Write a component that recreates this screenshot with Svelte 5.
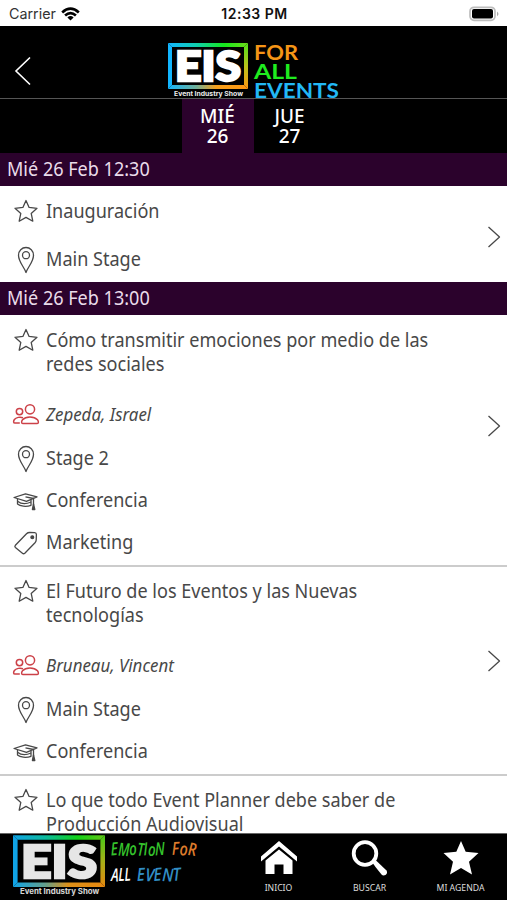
<script>
  const days = [
    { name: 'MIÉ', number: 26, active: true },
    { name: 'JUE', number: 27, active: false },
  ];

  const blocks = [
    {
      time: 'Mié 26 Feb 12:30',
      sessions: [
        { title: ['Inauguración'], rows: [{ icon: 'pin', text: 'Main Stage' }] },
      ],
    },
    {
      time: 'Mié 26 Feb 13:00',
      sessions: [
        {
          title: ['Cómo transmitir emociones por medio de las', 'redes sociales'],
          rows: [
            { icon: 'people', text: 'Zepeda, Israel' },
            { icon: 'pin', text: 'Stage 2' },
            { icon: 'cap', text: 'Conferencia' },
            { icon: 'tag', text: 'Marketing' },
          ],
        },
        {
          title: ['El Futuro de los Eventos y las Nuevas', 'tecnologías'],
          rows: [
            { icon: 'people', text: 'Bruneau, Vincent' },
            { icon: 'pin', text: 'Main Stage' },
            { icon: 'cap', text: 'Conferencia' },
          ],
        },
        {
          title: ['Lo que todo Event Planner debe saber de', 'Producción Audiovisual'],
          rows: [],
        },
      ],
    },
  ];
</script>

{#snippet eis(id)}
  <defs>
    <linearGradient id="{id}-top" x1="0" x2="1" y1="0" y2="0">
      <stop offset="0" stop-color="#12b5ff" />
      <stop offset="0.35" stop-color="#0fcfb0" />
      <stop offset="0.7" stop-color="#14e81c" />
      <stop offset="1" stop-color="#6fdc18" />
    </linearGradient>
    <linearGradient id="{id}-bottom" x1="0" x2="1" y1="0" y2="0">
      <stop offset="0" stop-color="#12b5ff" />
      <stop offset="0.35" stop-color="#6fb09a" />
      <stop offset="0.6" stop-color="#f5a01c" />
      <stop offset="1" stop-color="#ff9712" />
    </linearGradient>
    <linearGradient id="{id}-right" x1="0" x2="0" y1="0" y2="1">
      <stop offset="0" stop-color="#4fe01a" />
      <stop offset="0.5" stop-color="#b8c41a" />
      <stop offset="1" stop-color="#ff9712" />
    </linearGradient>
  </defs>
  <path fill="#12b5ff" d="M0 1L4 5V43L0 47Z" />
  <path fill="url(#{id}-top)" d="M0 1H80L76 5H4Z" />
  <path fill="url(#{id}-right)" d="M80 1V47L76 43V5Z" />
  <path fill="url(#{id}-bottom)" d="M0 47L4 43H76L80 47Z" />
  <text class="eis" x="7" y="38.800" textLength="66" lengthAdjust="spacingAndGlyphs">EIS</text>
  <text class="eis-sub" x="6" y="53.500" textLength="69" lengthAdjust="spacingAndGlyphs">Event Industry Show</text>
{/snippet}

<div class="screen">
  <div class="phone-bar">
    <div class="carrier">
      <span>Carrier</span>
      <svg width="19" height="14" viewBox="0 0 19 14">
        <g fill="none" stroke="#000" stroke-width="2.7">
          <path d="M1.200 5.400Q9.500-2 17.800 5.400" />
          <path d="M4.100 8.500Q9.500 3.700 14.900 8.500" />
        </g>
        <path d="M6.400 10.400Q9.500 7.800 12.600 10.400L9.500 13.500Z" />
      </svg>
    </div>
    <div class="clock">12:33 PM</div>
    <div class="battery">
      <svg width="32" height="16" viewBox="0 0 32 16">
        <rect x="2" y="1.300" width="25" height="13" rx="4" fill="#fff" stroke="#bdbdbd" stroke-width="1.700" />
        <rect x="4" y="3" width="21" height="9.600" rx="2" />
        <path d="M29 5.400Q32 7.800 29 10.200Z" fill="#aaa" />
      </svg>
    </div>
  </div>

  <header class="header">
    <svg class="back" width="18" height="30" viewBox="0 0 18 30">
      <path d="M16 1.500L2 15L16 28.500" fill="none" stroke="#fff" stroke-width="1.600" />
    </svg>
    <svg class="logo" width="172" height="56" viewBox="0 0 172 56">
      {@render eis('head')}
      <g class="slogan">
        <text x="86" y="18" fill="#f59516" textLength="44" lengthAdjust="spacingAndGlyphs">FOR</text>
        <text x="86" y="37" fill="#1fec1f" textLength="43" lengthAdjust="spacingAndGlyphs">ALL</text>
        <text x="86" y="55.500" fill="#22b8f5" textLength="85" lengthAdjust="spacingAndGlyphs">EVENTS</text>
      </g>
    </svg>
  </header>

  <nav class="days">
    {#each days as day}
      <div class="day" class:active={day.active}>
        <span>{day.name}</span>
        <span>{day.number}</span>
      </div>
    {/each}
  </nav>

  <main class="agenda">
    {#each blocks as block}
      <h2 class="time"><span>{block.time}</span></h2>
      {#each block.sessions as session}
        <article class="session">
          <div class="details">
            <div class="title">
              <svg class="star" width="26" height="24" viewBox="0 0 26 24">
                <path d="M14 1.500L17.100 8.400L25 9.300L19.200 14.400L20.800 22.200L14 18.400L7.200 22.200L8.800 14.400L3 9.300L10.900 8.400Z" />
              </svg>
              <div class="label">
                {#each session.title as line}
                  <div>{line}</div>
                {/each}
              </div>
            </div>
            {#each session.rows as row}
              <div class="row" class:speaker={row.icon === 'people'}>
                {#if row.icon === 'pin'}
                  <svg width="28" height="28" viewBox="0 0 28 28">
                    <path d="M14 26.500C12.500 21.500 6.500 16 6.500 9.200A7.500 7.700 0 0 1 21.500 9.200C21.500 16 15.500 21.500 14 26.500Z" />
                    <circle cx="14" cy="9.200" r="3.500" />
                  </svg>
                {:else if row.icon === 'people'}
                  <svg width="28" height="28" viewBox="0 0 28 28">
                    <circle cx="18" cy="8.300" r="4.600" />
                    <circle cx="7.500" cy="10.600" r="3.200" />
                    <path d="M10.800 22.500C9.200 22.500 9.300 20.300 10.500 18.800C14 15 22 15 25.500 18.800C26.700 20.300 26.800 22.500 25.200 22.500Z" />
                    <path d="M11 16.700C8 15.600 4 16.300 2.400 18.500C1.300 20.100 1.200 22.100 3 22.100H7.800" />
                  </svg>
                {:else if row.icon === 'cap'}
                  <svg width="28" height="28" viewBox="0 0 28 28">
                    <path d="M2 10.500L13.500 6.800L25 9.800L14.500 14.400Z" />
                    <path d="M13.500 9.800L21.500 11.500V18" />
                    <path d="M5.500 12V17C8 19.200 14 20.300 19 18.300V13" />
                    <path d="M5.500 14.200C9 17 14 17.300 19 15" />
                    <path d="M21.500 17L20.400 22.500H22.800Z" fill="#444" />
                  </svg>
                {:else}
                  <svg width="28" height="28" viewBox="0 0 28 28">
                    <path d="M3.400 16.200L14.500 4.800Q15.800 3.500 17.600 3.500L22.700 3.700Q24.400 3.800 24.400 5.500L24.200 11Q24.100 12.500 23 13.700L12.800 24.200Q11.600 25.300 10.400 24.200L3.400 18.500Q2.300 17.400 3.400 16.200Z" />
                    <circle cx="20.300" cy="8.200" r="1.400" fill="#444" />
                  </svg>
                {/if}
                <span class="label">{row.text}</span>
              </div>
            {/each}
          </div>
          <div class="more">
            <svg width="14" height="22" viewBox="0 0 14 22">
              <path d="M1.500 1L12.500 11L1.500 21" />
            </svg>
          </div>
        </article>
      {/each}
    {/each}
  </main>

  <footer class="tabbar">
    <svg class="banner" width="190" height="66" viewBox="0 0 190 66">
      <g transform="scale(1.150 1.130)" opacity="0.9">{@render eis('foot')}</g>
      <g class="hand">
        <text x="98" y="21.500" rotate="-4 3 -5 4 -3 5 -3" fill="#35c32c" textLength="54" lengthAdjust="spacingAndGlyphs">EMoTIoN</text>
        <text x="159" y="21" rotate="-3 4 6" fill="#dd7b2c" textLength="24" lengthAdjust="spacingAndGlyphs">FoR</text>
        <text x="98" y="47" rotate="3 -2 -4" fill="#fff" textLength="20" lengthAdjust="spacingAndGlyphs">ALL</text>
        <text x="124" y="47" rotate="-3 4 -4 3 -4" fill="#328fc5" textLength="44" lengthAdjust="spacingAndGlyphs">EVENT</text>
      </g>
    </svg>
    <div class="tab">
      <svg width="40" height="38" viewBox="0 0 40 38">
        <path d="M2 17.500L20 2L38 17.500V22.500L20 7.500L2 22.500Z" />
        <path d="M6.500 21.500L20 10.500L33.500 21.500V35H24.500V25.500H15.500V35H6.500Z" />
      </svg>
      <span>INICIO</span>
    </div>
    <div class="tab">
      <svg width="40" height="38" viewBox="0 0 40 38">
        <circle cx="15" cy="14.500" r="11.300" fill="none" stroke="#fff" stroke-width="3.800" />
        <path d="M22 23L25 20.500L36.500 31.500Q38 34 35.500 36Q33 37 31.500 35.500L25.500 28Z" />
      </svg>
      <span>BUSCAR</span>
    </div>
    <div class="tab">
      <svg width="40" height="38" viewBox="0 0 40 38">
        <path d="M20 2L24.700 12.800L37.500 14L28 22.800L31 35.500L20 29L9 35.500L12 22.800L2.500 14L15.300 12.800Z" />
      </svg>
      <span>MI AGENDA</span>
    </div>
  </footer>
</div>

<style>
  .screen {
    display: flex;
    flex-direction: column;
    width: 507px;
    height: 900px;
    overflow: hidden;
    background: #fff;
    color: #484848;
    font-family: "Noto Sans", sans-serif;
  }

  .phone-bar {
    display: grid;
    grid-template-columns: 1fr auto 1fr;
    align-items: center;
    height: 26px;
    padding: 1px 7px 0 9px;
    box-sizing: border-box;
    flex: none;
    color: #111;
    font-family: Inter, sans-serif;
    font-size: 14.3px;
  }

  .carrier {
    display: flex;
    align-items: center;
    gap: 5px;
    color: #333;
  }

  .clock {
    font-weight: 600;
    font-size: 14px;
    letter-spacing: 0.5px;
  }

  .battery {
    display: flex;
    justify-content: flex-end;
  }

  .header {
    display: flex;
    align-items: flex-end;
    height: 73px;
    flex: none;
    box-sizing: border-box;
    background: #000;
    border-bottom: 1px solid #555;
  }

  .back {
    margin: 0 136px 12px 14px;
  }

  .eis {
    font: 900 41px Lato, sans-serif;
    fill: #fff;
    stroke: #fff;
    stroke-width: 2.4px;
  }

  .eis-sub {
    font: 700 6.8px Inter, sans-serif;
    fill: #eee;
  }

  .logo {
    overflow: visible;
  }

  .slogan {
    font: 700 20.5px Lato, sans-serif;
  }

  .days {
    display: flex;
    justify-content: center;
    height: 54px;
    flex: none;
    background: #000;
  }

  .day {
    display: flex;
    flex-direction: column;
    align-items: center;
    width: 72px;
    padding-top: 7px;
    box-sizing: border-box;
    color: #fff;
    font-size: 19px;
    font-weight: 500;
    line-height: 20px;
  }

  .day.active {
    background: #2b022c;
  }

  .agenda {
    flex: 1;
    min-height: 0;
    overflow: hidden;
  }

  .time {
    height: 33px;
    margin: 0;
    padding-left: 7px;
    background: #2b022c;
    color: #eadcea;
    font-size: 19px;
    font-weight: 400;
    line-height: 33px;
  }

  .time span {
    display: inline-block;
    transform: scaleX(0.95);
    transform-origin: left;
  }

  .session {
    display: flex;
    justify-content: space-between;
    padding: 13px 6px 1px 12px;
    font-size: 19.5px;
    line-height: 24.5px;
  }

  .session + .session {
    border-top: 2px solid #ccc;
    padding-top: 12px;
  }

  .session:last-child {
    min-height: 210px;
  }

  .label {
    transform: scaleX(0.926);
    transform-origin: left;
  }

  .title {
    display: flex;
    gap: 8px;
    margin-bottom: 15px;
    white-space: nowrap;
  }

  .row {
    display: flex;
    align-items: center;
    gap: 6px;
    height: 42px;
  }

  .session svg {
    flex: none;
    fill: none;
    stroke: #484848;
    stroke-width: 1.3;
    stroke-linejoin: round;
  }

  .speaker {
    height: 46px;
    font-size: 17.5px;
    font-style: italic;
  }

  .speaker .label {
    transform: scaleX(0.965);
  }

  .session .speaker svg {
    stroke: #cc4148;
    stroke-width: 1.5;
  }

  .more {
    display: flex;
    flex-direction: column;
    padding-top: 7px;
  }

  .more::before {
    content: '';
    flex: 39;
  }

  .more::after {
    content: '';
    flex: 61;
  }

  .tabbar {
    display: flex;
    height: 67px;
    flex: none;
    box-sizing: border-box;
    padding-left: 13px;
    background: #000;
    border-top: 1px solid #666;
  }

  .banner {
    margin: 0 30px 0 0;
    flex: none;
  }

  .hand {
    font: italic 600 18px "Open Sans", sans-serif;
  }

  .tab {
    display: flex;
    flex-direction: column;
    align-items: center;
    width: 91px;
    padding-top: 5px;
    flex: none;
    color: #ddd;
    font-size: 8.7px;
  }

  .tab svg {
    fill: #fff;
  }

  .tab span {
    margin-top: 5px;
    line-height: 12px;
  }
</style>
